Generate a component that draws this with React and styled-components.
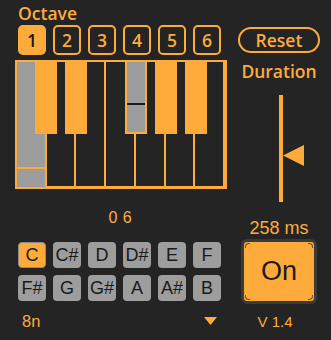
import React from 'react';
import styled, { createGlobalStyle, css } from 'styled-components';

const ORANGE = '#ffab3b';
const BG = '#242424';
const GRAY = '#9d9d9d';
const INK = '#1a1a1a';

const GlobalStyle = createGlobalStyle`
  body {
    margin: 0;
    background: ${BG};
  }
`;

const Device = styled.div`
  width: 331px;
  height: 340px;
  box-sizing: border-box;
  padding-left: 15px;
  display: flex;
  background: ${BG};
  font-family: "Liberation Sans", Arial, sans-serif;
  overflow: hidden;
`;

const LeftColumn = styled.div`
  width: 212px;
  display: flex;
  flex-direction: column;
`;

const Label = styled.div`
  font-family: "Open Sans", sans-serif;
  font-weight: 600;
  font-size: 17.5px;
  line-height: 20px;
  color: ${ORANGE};
`;

const OctaveLabel = styled(Label)`
  margin-top: 3px;
  padding-left: 3px;
`;

const OctaveRow = styled.div`
  display: flex;
  gap: 7px;
  margin-top: 2px;
  padding-left: 3px;
`;

const OctaveButton = styled.div`
  width: 28px;
  height: 30px;
  box-sizing: border-box;
  border: 2px solid ${ORANGE};
  border-radius: 5px;
  display: flex;
  align-items: center;
  justify-content: center;
  font-family: "Open Sans", sans-serif;
  font-weight: 600;
  font-size: 17.5px;
  color: ${(p) => (p.$active ? INK : ORANGE)};
  background: ${(p) => (p.$active ? ORANGE : 'transparent')};
`;

const Piano = styled.div`
  position: relative;
  margin-top: 5px;
  width: 212px;
  height: 129px;
  box-sizing: border-box;
  border: 2px solid ${ORANGE};
  display: flex;
`;

const WhiteKey = styled.div`
  width: 30px;
  box-sizing: border-box;
  border-right: 2px solid ${ORANGE};
  border-bottom: 1px solid ${ORANGE};
  display: flex;
  flex-direction: column;
  justify-content: flex-end;
  &:last-child {
    width: 28px;
    border-right: none;
  }
  ${(p) =>
    p.$on &&
    css`
      background: ${GRAY};
      border-bottom: none;
    `}
`;

const Velocity = styled.div`
  height: 2px;
  margin-bottom: ${(p) => p.$bottom}px;
  background: ${(p) => p.$color};
`;

const BlackKey = styled.div`
  position: absolute;
  top: 0;
  width: 22px;
  height: 72px;
  box-sizing: border-box;
  background: ${ORANGE};
  display: flex;
  flex-direction: column;
  ${(p) =>
    p.$on &&
    css`
      background: ${GRAY};
      border: 2px solid ${ORANGE};
      border-top: none;
    `}
`;

const BlackVelocity = styled.div`
  height: 2px;
  margin-top: ${(p) => p.$top}px;
  background: ${INK};
`;

const Readout = styled.div`
  margin-top: 21px;
  padding-right: 2px;
  text-align: center;
  font-size: 16px;
  line-height: 16px;
  color: ${ORANGE};
  word-spacing: 1px;
`;

const NoteGrid = styled.div`
  margin-top: 16px;
  padding-left: 3px;
  display: grid;
  grid-template-columns: repeat(6, 28px);
  grid-auto-rows: 26px;
  gap: 7px;
`;

const NoteButton = styled.div`
  box-sizing: border-box;
  border-radius: 4px;
  display: flex;
  align-items: center;
  justify-content: center;
  font-size: 18px;
  color: ${INK};
  background: ${(p) => (p.$active ? ORANGE : GRAY)};
  border: ${(p) => (p.$active ? `1px solid #8a8a8a` : 'none')};
`;

const Footer = styled.div`
  margin-top: 12px;
  padding: 0 10px 0 7px;
  display: flex;
  align-items: center;
  justify-content: space-between;
`;

const SmallValue = styled.div`
  font-size: 16.5px;
  line-height: 16px;
  color: ${ORANGE};
`;

const RightColumn = styled.div`
  width: 86px;
  margin-left: 9px;
  display: flex;
  flex-direction: column;
  align-items: center;
`;

const PillButton = styled.div`
  margin-top: 27px;
  width: 82px;
  height: 26px;
  box-sizing: border-box;
  border: 2px solid ${ORANGE};
  border-radius: 13px;
  display: flex;
  align-items: center;
  justify-content: center;
  font-family: "Open Sans", sans-serif;
  font-weight: 600;
  font-size: 17.5px;
  color: ${ORANGE};
`;

const DurationLabel = styled(Label)`
  margin-top: 8px;
`;

const Slider = styled.div`
  position: relative;
  margin-top: 14px;
  margin-left: 4px;
  width: 4px;
  height: 107px;
  background: ${ORANGE};
`;

const Pointer = styled.svg`
  position: absolute;
  left: 4px;
  top: ${(p) => p.$top}px;
`;

const DurationValue = styled.div`
  margin-top: 17px;
  font-size: 18px;
  line-height: 18px;
  color: ${ORANGE};
`;

const ToggleButton = styled.div`
  position: relative;
  margin-top: 2px;
  width: 76px;
  height: 65px;
  box-sizing: border-box;
  border: 3px solid #3a3a3a;
  border-radius: 6px;
  background: ${ORANGE};
  display: flex;
  align-items: center;
  justify-content: center;
  font-size: 27px;
  color: ${INK};
`;

const Corner = styled.span`
  position: absolute;
  width: 4px;
  height: 4px;
  ${(p) => (p.$v === 'top' ? 'top: 1px;' : 'bottom: 1px;')}
  ${(p) => (p.$h === 'left' ? 'left: 1px;' : 'right: 1px;')}
  border-${(p) => p.$v}: 1px solid #6a4a1a;
  border-${(p) => p.$h}: 1px solid #6a4a1a;
  border-${(p) => p.$v}-${(p) => p.$h}-radius: 4px;
`;

const Version = styled.div`
  margin-top: 10px;
  margin-right: 8px;
  font-size: 15px;
  line-height: 15px;
  color: ${ORANGE};
`;

const whiteKeys = [
  { note: 'C', on: true, velocity: 18 },
  { note: 'D' },
  { note: 'E' },
  { note: 'F' },
  { note: 'G' },
  { note: 'A' },
  { note: 'B' },
];

const blackKeys = [
  { note: 'C#', left: 18 },
  { note: 'D#', left: 48 },
  { note: 'F#', left: 108, on: true, velocity: 41 },
  { note: 'G#', left: 138 },
  { note: 'A#', left: 168 },
];

const notes = ['C', 'C#', 'D', 'D#', 'E', 'F', 'F#', 'G', 'G#', 'A', 'A#', 'B'];

export default function App() {
  return (
    <>
      <GlobalStyle />
      <Device>
        <LeftColumn>
          <OctaveLabel>Octave</OctaveLabel>
          <OctaveRow>
            {[1, 2, 3, 4, 5, 6].map((n) => (
              <OctaveButton key={n} $active={n === 1}>
                {n}
              </OctaveButton>
            ))}
          </OctaveRow>
          <Piano>
            {whiteKeys.map((k) => (
              <WhiteKey key={k.note} $on={k.on}>
                {k.on && <Velocity $color={ORANGE} $bottom={k.velocity} />}
              </WhiteKey>
            ))}
            {blackKeys.map((k) => (
              <BlackKey key={k.note} $on={k.on} style={{ left: k.left }}>
                {k.on && <BlackVelocity $top={k.velocity} />}
              </BlackKey>
            ))}
          </Piano>
          <Readout>0 6</Readout>
          <NoteGrid>
            {notes.map((n) => (
              <NoteButton key={n} $active={n === 'C'}>
                {n}
              </NoteButton>
            ))}
          </NoteGrid>
          <Footer>
            <SmallValue>8n</SmallValue>
            <svg width="13" height="8" viewBox="0 0 13 8">
              <polygon points="0,0 13,0 6.5,8" fill={ORANGE} />
            </svg>
          </Footer>
        </LeftColumn>
        <RightColumn>
          <PillButton>Reset</PillButton>
          <DurationLabel>Duration</DurationLabel>
          <Slider>
            <Pointer $top={50} width="21" height="21" viewBox="0 0 21 21">
              <polygon points="0,10.5 21,0 21,21" fill={ORANGE} />
            </Pointer>
          </Slider>
          <DurationValue>258 ms</DurationValue>
          <ToggleButton>
            On
            <Corner $v="top" $h="left" />
            <Corner $v="top" $h="right" />
            <Corner $v="bottom" $h="left" />
            <Corner $v="bottom" $h="right" />
          </ToggleButton>
          <Version>V 1.4</Version>
        </RightColumn>
      </Device>
    </>
  );
}
